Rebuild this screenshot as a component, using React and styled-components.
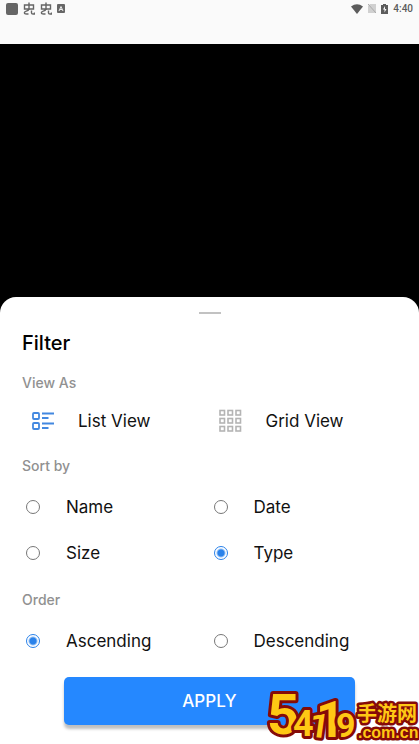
import React, { useState } from 'react';
import styled, { createGlobalStyle } from 'styled-components';

const sortOptions = ['Name', 'Date', 'Size', 'Type'];
const orderOptions = ['Ascending', 'Descending'];
const gridOffsets = [0, 8, 16];

const BugIcon = () => (
  <svg width="12" height="13" viewBox="0 0 12 13" fill="none" stroke="#666" strokeWidth="1.4">
    <path d="M1.500 3h9v4h-9zM6 .5V8M6 7C5 10 2 8.500 1.500 10.500S4 12 5.500 12M8.500 8.500v2.500q0 1 1.500 1h1.500v-1.500" />
  </svg>
);

const ListIcon = () => (
  <svg width="24" height="20" viewBox="0 0 24 20" fill="none" stroke="#4288e0">
    <rect x="2" y="2" width="6" height="6" rx="1" strokeWidth="1.8" />
    <rect x="2" y="12" width="6" height="6" rx="1" strokeWidth="1.8" />
    <path d="M11 2.500h12M11 7h6.500M11 12.500h12M11 17h6.500" strokeWidth="1.800" />
  </svg>
);

const GridIcon = () => (
  <svg width="24" height="24" viewBox="0 0 24 24" fill="none" stroke="#b4b4b4" strokeWidth="1.600">
    {gridOffsets.map(y => gridOffsets.map(x => (
      <rect key={`${x}-${y}`} x={x + 1} y={y + 1.5} width="4.500" height="4.500" />
    )))}
  </svg>
);

const RadioGroup = ({ name, options, value, onChange }) => (
  <Options>
    {options.map(option => (
      <RadioLabel key={option}>
        <Radio
          name={name}
          value={option}
          checked={value === option}
          onChange={() => onChange(option)}
        />
        {option}
      </RadioLabel>
    ))}
  </Options>
);

const StatusBar = () => (
  <Status>
    <StatusIcons>
      <svg width="12" height="12" viewBox="0 0 12 12">
        <rect width="12" height="12" rx="2" fill="#666" />
      </svg>
      <BugIcon />
      <BugIcon />
      <svg width="8" height="9" viewBox="0 0 8 9">
        <rect width="8" height="9" rx="1" fill="#666" />
        <path d="M2 7l2-4.500L6 7M3 5.500h2" fill="none" stroke="#eee" />
      </svg>
    </StatusIcons>
    <StatusIcons>
      <svg width="12" height="10" viewBox="0 0 12 10">
        <path d="M0 2.500Q6-2 12 2.500L6 10z" fill="#5c5c5c" />
      </svg>
      <svg width="8" height="9" viewBox="0 0 8 9">
        <path d="M2 0h6v9H0V2z" fill="#d0d0d0" />
        <path d="M0 0l8 9" stroke="#aaa" />
      </svg>
      <svg width="7" height="10" viewBox="0 0 7 10">
        <path d="M2 0h3v1h2v9H0V1h2z" fill="#5c5c5c" />
        <path d="M4 2L2 5.500h1.500V8.500L5.500 5H4z" fill="#fafafa" />
      </svg>
      <Clock>4:40</Clock>
    </StatusIcons>
  </Status>
);

const SiteLogo = () => (
  <Logo viewBox="0 0 157 59" role="img" aria-label="54119 手游网 .com.cn">
    <Digits>
      <text x="5" y="49" fontSize="56">5</text>
      <text x="31" y="51" fontSize="36">4</text>
      <text x="46" y="51" fontSize="34" transform="rotate(8 46 51)">1</text>
      <text x="54" y="52" fontSize="50">1</text>
      <text x="74" y="52" fontSize="34">9</text>
    </Digits>
    <SiteName>
      <text x="95" y="36" fontSize="20">手游网</text>
      <text x="96" y="53" fontSize="16">.com.cn</text>
    </SiteName>
  </Logo>
);

const App = () => {
  const [view, setView] = useState('list');
  const [sort, setSort] = useState('Type');
  const [order, setOrder] = useState('Ascending');

  return (
    <Page>
      <GlobalStyle />
      <StatusBar />
      <Backdrop />
      <Sheet>
        <Handle />
        <Title>Filter</Title>
        <Label>View As</Label>
        <Options>
          <ViewButton type="button" aria-pressed={view === 'list'} onClick={() => setView('list')}>
            <ListIcon />
            List View
          </ViewButton>
          <ViewButton type="button" aria-pressed={view === 'grid'} onClick={() => setView('grid')}>
            <GridIcon />
            Grid View
          </ViewButton>
        </Options>
        <Label>Sort by</Label>
        <RadioGroup name="sort" options={sortOptions} value={sort} onChange={setSort} />
        <Label>Order</Label>
        <RadioGroup name="order" options={orderOptions} value={order} onChange={setOrder} />
        <ApplyButton type="button">APPLY</ApplyButton>
        <SiteLogo />
      </Sheet>
    </Page>
  );
}

const GlobalStyle = createGlobalStyle`
  * {
    box-sizing: border-box;
  }
  body {
    margin: 0;
    background-color: #000;
    font-family: Inter, 'Noto Sans', sans-serif;
  }
`;
const Page = styled.div`
  display: flex;
  flex-direction: column;
  min-height: 100vh;
`;
const Status = styled.header`
  display: flex;
  justify-content: space-between;
  align-items: flex-start;
  height: 44px;
  padding: 2px 6px;
  background-color: #fafafa;
`;
const StatusIcons = styled.div`
  display: flex;
  align-items: center;
  gap: 5px;
  height: 13px;
`;
const Clock = styled.span`
  font-family: Roboto, sans-serif;
  font-size: 10px;
  font-weight: 500;
  color: #5c5c5c;
`;
const Backdrop = styled.div`
  flex: 1;
`;
const Sheet = styled.main`
  position: relative;
  display: flex;
  flex-direction: column;
  padding: 15px 22px 19px;
  border-radius: 16px 16px 0 0;
  background-color: #fff;
`;
const Handle = styled.div`
  align-self: center;
  width: 22px;
  height: 2px;
  background-color: #c2c2c2;
`;
const Title = styled.h1`
  margin: 15px 0 2px;
  font-size: 20px;
  line-height: 28px;
  font-weight: 500;
  color: #000;
`;
const Label = styled.h2`
  margin: 14px 0 8px;
  font-size: 14px;
  line-height: 20px;
  font-weight: 500;
  color: #919191;
`;
const Options = styled.div`
  display: grid;
  grid-template-columns: 1fr 1fr;
`;
const ViewButton = styled.button`
  display: flex;
  align-items: center;
  gap: 23px;
  height: 41px;
  padding: 0 0 1px 9px;
  border: none;
  background: none;
  font: inherit;
  font-size: 17px;
  color: #111;
`;
const RadioLabel = styled.label`
  display: flex;
  align-items: center;
  gap: 26px;
  height: 46px;
  padding-left: 4px;
  font-size: 17px;
  color: #111;
`;
const Radio = styled.input.attrs({ type: 'radio' })`
  appearance: none;
  width: 14px;
  height: 14px;
  margin: 0;
  border: 1px solid #777;
  border-radius: 50%;

  &:checked {
    border-color: #2a82ea;
    background: radial-gradient(circle, #2a82ea 3px, transparent 5px);
  }
`;
const ApplyButton = styled.button`
  height: 48px;
  margin: 13px 42px 0;
  border: none;
  border-radius: 5px;
  background-color: #2588ff;
  box-shadow: 0 4px 3px rgba(0, 0, 0, 0.25);
  font: inherit;
  font-size: 17px;
  font-weight: 500;
  color: #fff;
`;
const Logo = styled.svg`
  position: absolute;
  right: 0;
  bottom: 0;
  width: 157px;
  height: 59px;
`;
const Digits = styled.g`
  font-family: Roboto, sans-serif;
  font-weight: 700;
  fill: #ffc814;
  stroke: #850b08;
  stroke-width: 6px;
  stroke-linejoin: round;
  paint-order: stroke;
`;
const SiteName = styled(Digits)`
  font-family: 'Liberation Sans', 'Noto Sans CJK SC', sans-serif;
  stroke-width: 5px;
`;

export default App;
